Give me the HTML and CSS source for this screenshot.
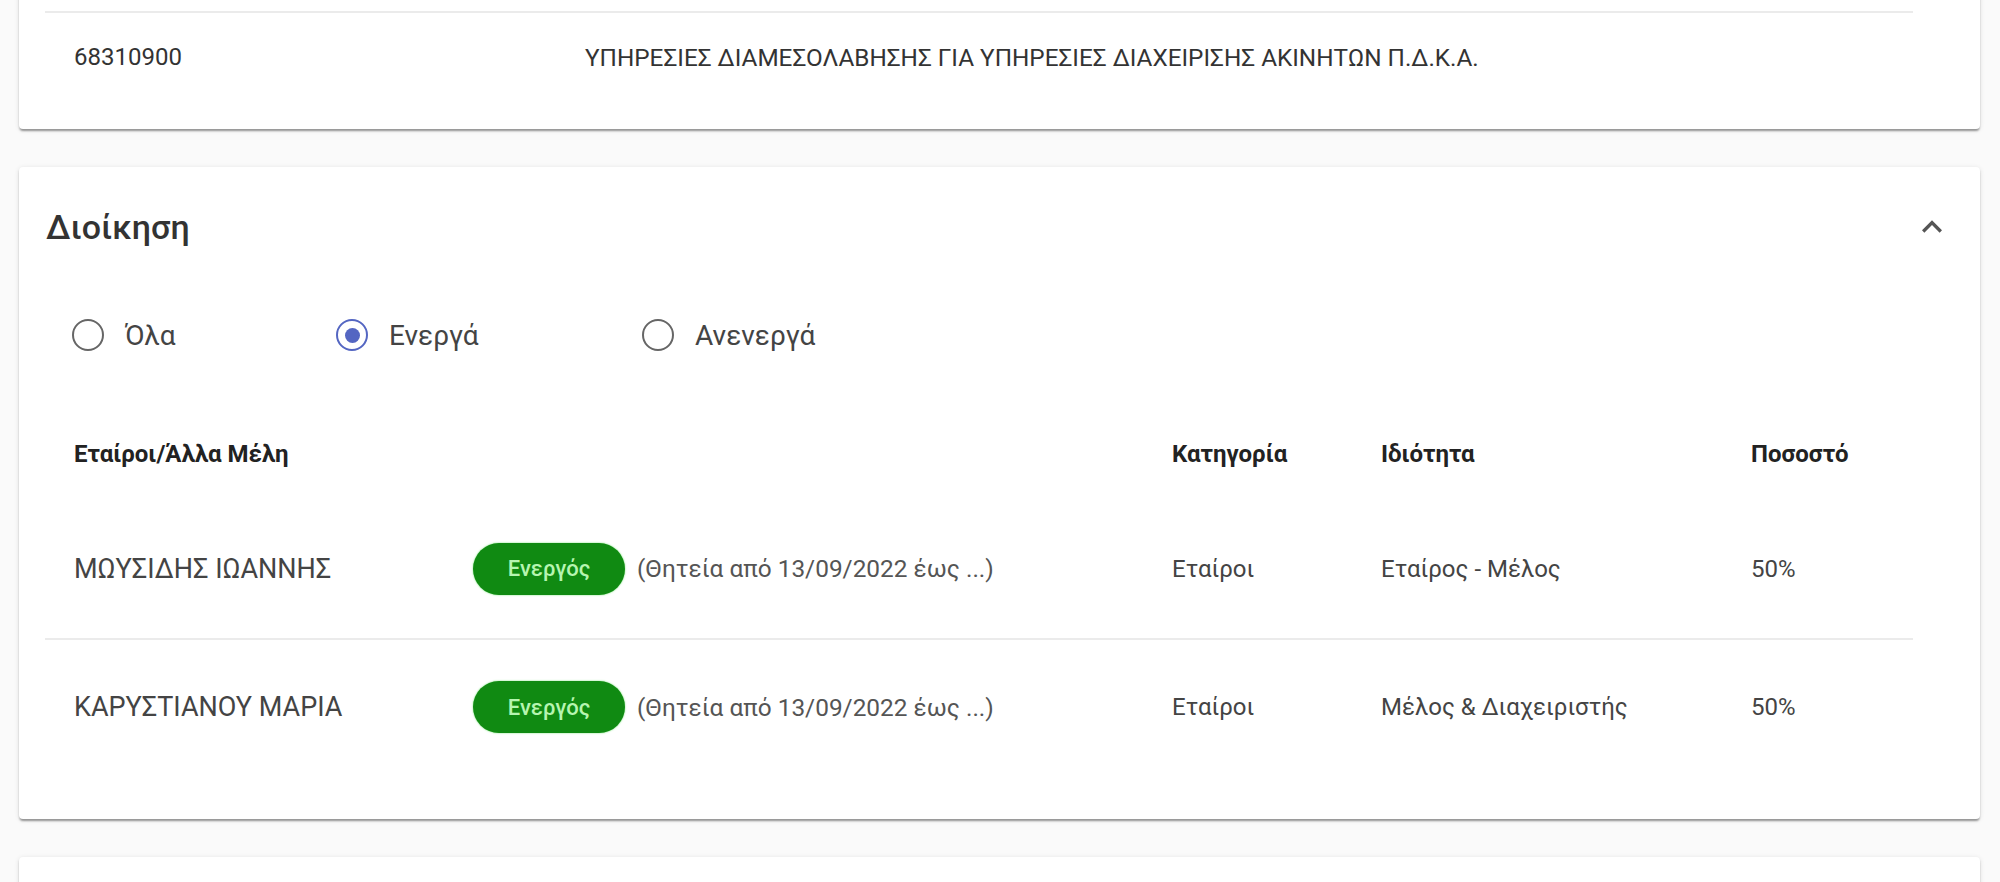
FILE: index.html
```html
<!DOCTYPE html>
<html lang="el">
<head>
    <meta charset="UTF-8">
    <meta name="viewport" content="width=device-width, initial-scale=1.0">
    <title>Διοίκηση</title>
    <link rel="stylesheet" href="styles.css">
</head>
<body>
    <div class="page">
        <div class="card card-kad">
            <div class="kad-row">
                <span class="kad-code">68310900</span>
                <span class="kad-desc">ΥΠΗΡΕΣΙΕΣ ΔΙΑΜΕΣΟΛΑΒΗΣΗΣ ΓΙΑ ΥΠΗΡΕΣΙΕΣ ΔΙΑΧΕΙΡΙΣΗΣ ΑΚΙΝΗΤΩΝ Π.Δ.Κ.Α.</span>
            </div>
        </div>

        <div class="card card-admin">
            <div class="card-head">
                <h2 class="card-title">Διοίκηση</h2>
                <button class="expand" type="button" aria-label="Σύμπτυξη">
                    <svg viewBox="0 0 24 24" width="40" height="40"><path d="M12 8l-6 6 1.41 1.41L12 10.83l4.59 4.58L18 14z"/></svg>
                </button>
            </div>

            <div class="filters">
                <label class="radio"><input type="radio" name="status"><span class="dot"></span>Όλα</label>
                <label class="radio"><input type="radio" name="status" checked><span class="dot"></span>Ενεργά</label>
                <label class="radio"><input type="radio" name="status"><span class="dot"></span>Ανενεργά</label>
            </div>

            <div class="members">
                <div class="members-head">
                    <div class="col-wide">Εταίροι/Άλλα Μέλη</div>
                    <div>Κατηγορία</div>
                    <div>Ιδιότητα</div>
                    <div>Ποσοστό</div>
                </div>
                <div class="member">
                    <div class="name">ΜΩΥΣΙΔΗΣ ΙΩΑΝΝΗΣ</div>
                    <div class="status"><span class="badge">Ενεργός</span><span class="term">(Θητεία από 13/09/2022 έως ...)</span></div>
                    <div>Εταίροι</div>
                    <div>Εταίρος - Μέλος</div>
                    <div>50%</div>
                </div>
                <div class="member">
                    <div class="name">ΚΑΡΥΣΤΙΑΝΟΥ ΜΑΡΙΑ</div>
                    <div class="status"><span class="badge">Ενεργός</span><span class="term">(Θητεία από 13/09/2022 έως ...)</span></div>
                    <div>Εταίροι</div>
                    <div>Μέλος &amp; Διαχειριστής</div>
                    <div>50%</div>
                </div>
            </div>
        </div>

        <div class="card card-next"></div>
    </div>
</body>
</html>
```

FILE: styles.css
```css
body {
    margin: 0;
    font-family: Roboto, "Noto Sans", sans-serif;
    background-color: #fafafa;
    color: #333;
    overflow: hidden;
}

.page {
    padding: 0 20px 0 19px;
}

.card {
    background-color: #fff;
    border-radius: 4px;
    box-shadow: 0 3px 2px -1px rgba(0, 0, 0, 0.25), 0 2px 2px 0 rgba(0, 0, 0, 0.14), 0 1px 5px 0 rgba(0, 0, 0, 0.12);
    margin-bottom: 38px;
}

/* first card is scrolled up, only its last row shows */
.card-kad {
    margin-top: -40px;
    padding: 51px 67px 28px 26px;
}

.kad-row {
    display: flex;
    align-items: center;
    height: 88px;
    border-top: 2px solid #ebebeb;
    font-size: 24px;
    color: #333;
}

.kad-code {
    width: 511px;
    padding-left: 29px;
}

.kad-desc {
    font-size: 24.3px;
}

.card-head {
    display: flex;
    align-items: center;
    justify-content: space-between;
    height: 120px;
    padding: 0 28px 4px 27px;
}

.card-title {
    margin: 0;
    font-size: 34px;
    font-weight: 500;
    color: #333;
}

.expand {
    border: none;
    background: none;
    padding: 0;
    width: 40px;
    height: 40px;
    cursor: pointer;
    fill: #555;
}

.filters {
    display: grid;
    grid-template-columns: 264px 306px auto;
    align-items: center;
    height: 88px;
    padding-left: 53px;
    font-size: 28px;
    color: #444;
}

.radio {
    display: flex;
    align-items: center;
    gap: 21px;
    cursor: pointer;
}

.radio input {
    display: none;
}

.dot {
    width: 32px;
    height: 32px;
    border: 2.5px solid #666;
    border-radius: 50%;
    box-sizing: border-box;
    display: flex;
    align-items: center;
    justify-content: center;
}

.radio input:checked + .dot {
    border-color: #5466c2;
}

.radio input:checked + .dot::after {
    content: "";
    width: 15px;
    height: 15px;
    border-radius: 50%;
    background-color: #5466c2;
}

.members {
    margin: 30px 67px 0 26px;
    padding-bottom: 45px;
}

.members-head,
.member {
    display: grid;
    grid-template-columns: 399px 699px 209px 370px 1fr;
    align-items: center;
    padding-left: 29px;
}

.members-head {
    height: 90px;
    font-size: 24px;
    font-weight: 700;
    color: #222;
}

.col-wide {
    grid-column: span 2;
}

.member {
    height: 139px;
    font-size: 24px;
    color: #444;
}

.member + .member {
    border-top: 2px solid #ebebeb;
    height: 134px;
}

.member .name {
    font-size: 27px;
}

.status {
    display: flex;
    align-items: center;
    gap: 12px;
}

.badge {
    display: inline-flex;
    align-items: center;
    justify-content: center;
    width: 152px;
    height: 52px;
    border-radius: 26px;
    background-color: #108a12;
    box-shadow: 0 0 2px #6fe06f;
    color: #b6f5b0;
    font-size: 22px;
    font-weight: 500;
}

.term {
    font-size: 24.4px;
    color: #555;
}

.card-next {
    height: 60px;
    margin-bottom: 0;
}
```
